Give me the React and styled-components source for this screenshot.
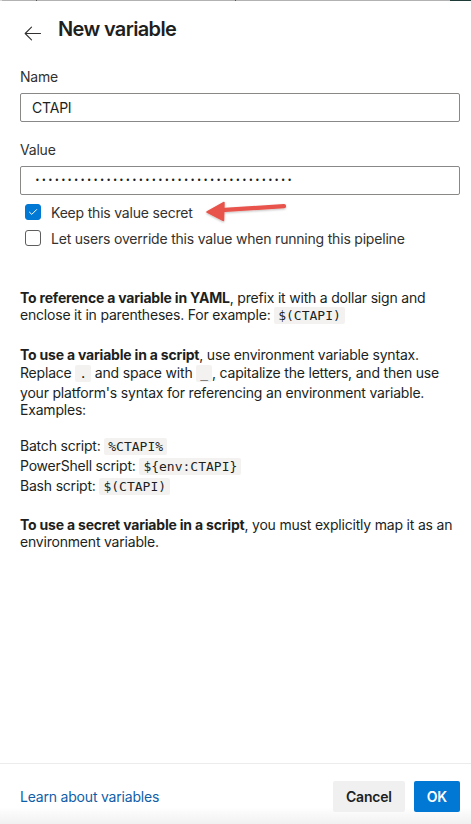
import React from "react";
import styled, { createGlobalStyle } from "styled-components";

const GlobalStyle = createGlobalStyle`
  html, body {
    margin: 0;
    padding: 0;
    background: #fff;
  }
  body {
    font-family: Inter, "Noto Sans", sans-serif;
    letter-spacing: -0.2px;
    color: #201f1e;
  }
  * {
    box-sizing: border-box;
  }
`;

const Panel = styled.div`
  display: flex;
  flex-direction: column;
  width: 471px;
  height: 824px;
  overflow: hidden;
  background: #fff;
`;

// edge of the window behind the panel
const TopEdge = styled.div`
  flex-shrink: 0;
  height: 1px;
  background: linear-gradient(
    to right,
    #d8d8d8 0 2px,
    #b2b2b2 2px 36px,
    #555 36px 37px,
    #b2b2b2 37px 235px,
    #555 235px 236px,
    #b2b2b2 236px 450px,
    #1e3b38 450px
  );
`;

const Header = styled.header`
  display: flex;
  align-items: center;
  gap: 17px;
  height: 42px;
  padding: 14px 20px 0 24px;
`;

const BackButton = styled.button`
  display: flex;
  align-items: center;
  padding: 0;
  margin-top: 9px;
  border: none;
  background: none;
  color: #323130;
  cursor: pointer;
`;

const Title = styled.h1`
  margin: 0;
  font-size: 20px;
  font-weight: 600;
  line-height: 28px;
  letter-spacing: -0.65px;
  color: #201f1e;
`;

const Content = styled.main`
  flex: 1;
  padding: 0 11px 0 20px;
`;

const Label = styled.label`
  display: block;
  margin-top: ${({ $top }) => $top}px;
  margin-bottom: 6px;
  font-size: 14px;
  line-height: 20px;
  color: #323130;
`;

const TextInput = styled.input`
  display: block;
  width: 100%;
  height: 29px;
  padding: 0 11px;
  border: 1px solid #8a8886;
  border-radius: 2px;
  font-family: Inter, "Noto Sans", sans-serif;
  font-size: 14px;
  letter-spacing: -0.2px;
  color: #201f1e;
  outline: none;
`;

const SecretInput = styled(TextInput)`
  padding-left: 14px;
  font-family: "DejaVu Sans", sans-serif;
  font-size: 8px;
  letter-spacing: 1.75px;
`;

const CheckRow = styled.label`
  display: flex;
  align-items: center;
  gap: 10px;
  height: 20px;
  margin: ${({ $first }) => ($first ? "7px" : "6px")} 0 0 5px;
  font-size: 14px;
  color: #323130;
`;

const Box = styled.span`
  display: flex;
  align-items: center;
  justify-content: center;
  width: 16px;
  height: 16px;
  border-radius: 3px;
  background: ${({ $checked }) => ($checked ? "#0078d4" : "#fff")};
  border: 1px solid ${({ $checked }) => ($checked ? "#0078d4" : "#605e5c")};
`;

const Callout = styled.svg`
  margin-left: 2px;
  margin-top: -2px;
`;

const Code = styled.code`
  display: inline-block;
  padding: 0 4px;
  font-family: "DejaVu Sans Mono", monospace;
  font-size: 13px;
  line-height: 17px;
  letter-spacing: 0;
  background: #f3f2f1;
  border-radius: 2px;
  color: #201f1e;
`;

const Para = styled.p`
  margin: ${({ $top }) => $top}px 0 0;
  font-size: 14px;
  line-height: 17.4px;
  color: #201f1e;

  ${Code} {
    margin-bottom: 2px;
  }
`;

const Examples = styled.div`
  margin-top: 17px;
  font-size: 14px;
  line-height: 20px;
`;

const Footer = styled.footer`
  display: flex;
  justify-content: space-between;
  align-items: flex-start;
  flex-shrink: 0;
  height: 61px;
  padding: 17px 11px 0 20px;
  border-top: 1px solid #ececec;
  background: linear-gradient(to bottom, #fff 72%, #f1f1f1);
`;

const LearnLink = styled.a`
  font-size: 14px;
  line-height: 31px;
  color: #0f5ea8;
  text-decoration: none;
`;

const Actions = styled.div`
  display: flex;
  gap: 9px;
`;

const Button = styled.button`
  height: 31px;
  padding: 0 13px;
  border: none;
  border-radius: 2px;
  font-family: Inter, "Noto Sans", sans-serif;
  font-size: 14px;
  font-weight: 600;
  letter-spacing: -0.2px;
  background: ${({ $primary }) => ($primary ? "#0078d4" : "#f0f0f0")};
  color: ${({ $primary }) => ($primary ? "#fff" : "#201f1e")};
  cursor: pointer;
`;

const BackArrow = () => (
  <svg width="17" height="15" viewBox="0 0 17 15" fill="none">
    <path
      d="M16.5 7.5H1.2M7.5 1.2L1.2 7.5L7.5 13.8"
      stroke="currentColor"
      strokeWidth="1.1"
      strokeLinecap="round"
      strokeLinejoin="round"
    />
  </svg>
);

const Check = () => (
  <svg width="10" height="8" viewBox="0 0 10 8" fill="none">
    <path
      d="M1.5 4.2L3.8 6.4L8.6 1.6"
      stroke="#fff"
      strokeWidth="1"
      strokeLinecap="round"
      strokeLinejoin="round"
    />
  </svg>
);

const RedArrow = () => (
  <Callout width="84" height="26" viewBox="0 0 84 26">
    <defs>
      <filter id="shade" x="-10%" y="-30%" width="120%" height="160%">
        <feDropShadow dx="0" dy="1" stdDeviation="0.8" floodColor="#000" floodOpacity="0.25" />
      </filter>
    </defs>
    <g filter="url(#shade)">
      <path d="M16 12.2L79 8.2" stroke="#e8534b" strokeWidth="4.2" strokeLinecap="round" />
      <path d="M2 14L19 4.5L18.5 22.5Z" fill="#e8534b" stroke="#e8534b" strokeWidth="1.5" strokeLinejoin="round" />
    </g>
  </Callout>
);

export default function App() {
  return (
    <>
      <GlobalStyle />
      <Panel>
        <TopEdge />
        <Header>
          <BackButton aria-label="Back">
            <BackArrow />
          </BackButton>
          <Title>New variable</Title>
        </Header>
        <Content>
          <Label $top={24}>Name</Label>
          <TextInput defaultValue="CTAPI" />
          <Label $top={18}>Value</Label>
          <SecretInput type="password" defaultValue={"x".repeat(40)} />
          <CheckRow $first>
            <Box $checked>
              <Check />
            </Box>
            Keep this value secret
            <RedArrow />
          </CheckRow>
          <CheckRow>
            <Box />
            Let users override this value when running this pipeline
          </CheckRow>

          <Para $top={41}>
            <b>To reference a variable in YAML</b>, prefix it with a dollar sign and
            enclose it in parentheses. For example: <Code>$(CTAPI)</Code>
          </Para>
          <Para $top={20}>
            <b>To use a variable in a script</b>, use environment variable syntax.
            Replace <Code>.</Code> and space with <Code>_</Code>, capitalize the
            letters, and then use your platform's syntax for referencing an
            environment variable. Examples:
          </Para>
          <Examples>
            Batch script: <Code>%CTAPI%</Code>
            <br />
            PowerShell script: <Code>{"${env:CTAPI}"}</Code>
            <br />
            Bash script: <Code>$(CTAPI)</Code>
          </Examples>
          <Para $top={20}>
            <b>To use a secret variable in a script</b>, you must explicitly map it
            as an environment variable.
          </Para>
        </Content>
        <Footer>
          <LearnLink href="#">Learn about variables</LearnLink>
          <Actions>
            <Button>Cancel</Button>
            <Button $primary>OK</Button>
          </Actions>
        </Footer>
      </Panel>
    </>
  );
}
